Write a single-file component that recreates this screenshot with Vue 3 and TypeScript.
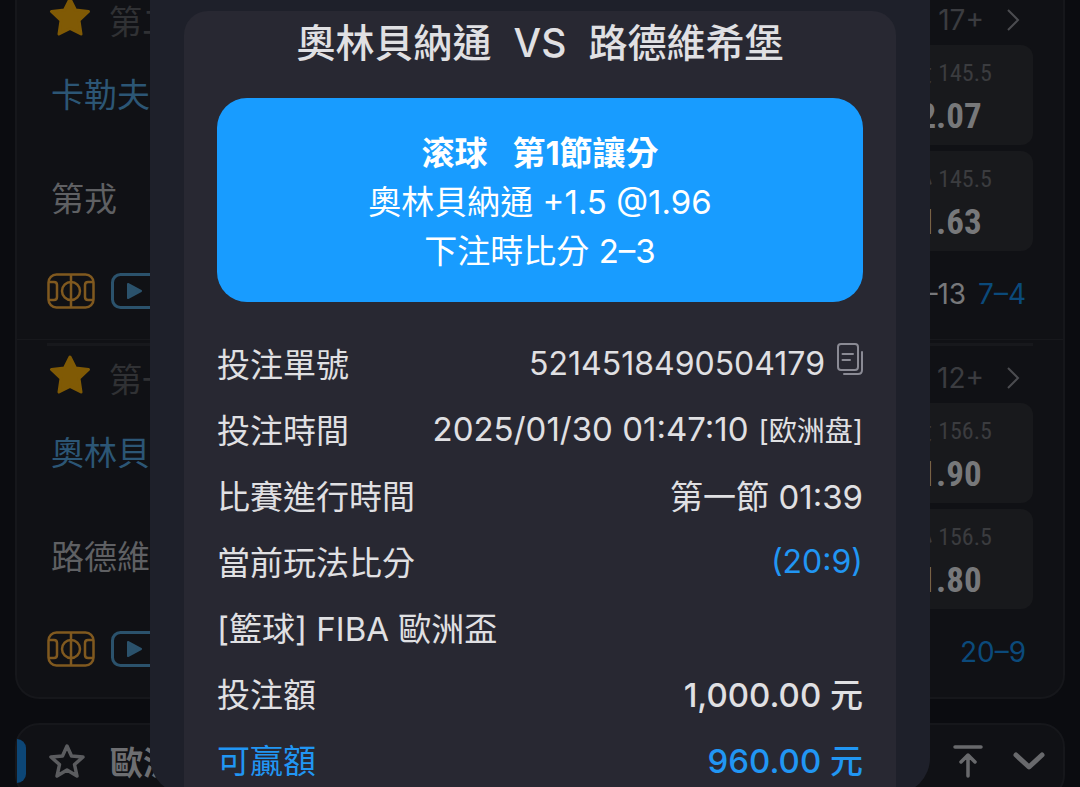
<script setup lang="ts">
interface Odd { label: string; line: string; value: string }
interface Match {
  period: string
  more: string
  home: string
  away: string
  odds: Odd[]
  total: string
  quarter: string
}
interface Row { label: string; value?: string; note?: string; copy?: boolean; tone?: string }

const matches: Match[] = [
  {
    period: '第二', more: '17+', home: '卡勒夫', away: '第戎',
    odds: [{ label: '大', line: '145.5', value: '2.07' }, { label: '小', line: '145.5', value: '1.63' }],
    total: '–13', quarter: '7–4',
  },
  {
    period: '第一', more: '12+', home: '奧林貝', away: '路德維',
    odds: [{ label: '大', line: '156.5', value: '1.90' }, { label: '小', line: '156.5', value: '1.80' }],
    total: '', quarter: '20–9',
  },
]

const rows: Row[] = [
  { label: '投注單號', value: '5214518490504179', copy: true, tone: 'number' },
  { label: '投注時間', value: '2025/01/30 01:47:10', note: '[欧洲盘]' },
  { label: '比賽進行時間', value: '第一節 01:39' },
  { label: '當前玩法比分', value: '(20:9)', tone: 'score' },
  { label: '[籃球] FIBA 歐洲盃' },
  { label: '投注額', value: '1,000.00 元', tone: 'money' },
  { label: '可贏額', value: '960.00 元', tone: 'win' },
]
</script>

<template>
  <div class="screen">
    <main class="list">
      <section class="card">
        <article v-for="m in matches" :key="m.more" class="match">
          <header class="head">
            <button class="icon" type="button" aria-label="收藏">
              <svg width="42" height="40" viewBox="0 0 42 40"><path d="M21 2 L26.500 13 L39.500 14.500 L30 23.500 L32 37 L21 31.500 L10 37 L12 23.500 L2.500 14.500 L15.500 13 Z" fill="#805a05" stroke="#805a05" stroke-width="3" stroke-linejoin="round" /></svg>
            </button>
            <span class="period">{{ m.period }}</span>
            <a class="more" href="#">{{ m.more }}
              <svg width="14" height="24" viewBox="0 0 14 24"><path d="M2 2 L12 12 L2 22" fill="none" stroke="#4b4c50" stroke-width="2" /></svg>
            </a>
          </header>
          <div class="body">
            <div class="teams">
              <span class="home">{{ m.home }}</span>
              <span>{{ m.away }}</span>
            </div>
            <div class="odds">
              <button v-for="o in m.odds" :key="o.label" class="odd" type="button">
                <span class="line"><span>{{ o.label }}</span><span>{{ o.line }}</span></span>
                <strong>{{ o.value }}</strong>
              </button>
            </div>
          </div>
          <footer class="foot">
            <svg width="48" height="36" viewBox="0 0 48 36" fill="none" stroke="#80591f" stroke-width="2.500">
              <rect x="1.500" y="1.500" width="45" height="33" rx="8" />
              <path d="M24 1 V35 M1 9 H7 Q10 9 10 12 V24 Q10 27 7 27 H1 M47 9 H41 Q38 9 38 12 V24 Q38 27 41 27 H47" />
              <circle cx="24" cy="18" r="9" />
            </svg>
            <svg width="52" height="36" viewBox="0 0 52 36">
              <rect x="1.500" y="1.500" width="49" height="33" rx="8" fill="none" stroke="#2b526c" stroke-width="3" />
              <path d="M17 11 L30 18 L17 25 Z" fill="#2b526c" stroke="#2b526c" stroke-width="2" stroke-linejoin="round" />
            </svg>
            <span class="total">{{ m.total }}</span>
            <span class="quarter">{{ m.quarter }}</span>
          </footer>
        </article>
      </section>

      <section class="card league">
        <button class="icon" type="button" aria-label="收藏聯賽">
          <svg width="38" height="36" viewBox="0 0 38 36"><path d="M19 3 L23.500 13 L35 14 L26.500 21.500 L29 33 L19 27 L9 33 L11.500 21.500 L3 14 L14.500 13 Z" fill="none" stroke="#5b5c5f" stroke-width="3.500" stroke-linejoin="round" /></svg>
        </button>
        <h2>歐洲</h2>
        <button class="icon top" type="button" aria-label="回到頂部">
          <svg width="30" height="34" viewBox="0 0 30 34" fill="none" stroke="#68696c" stroke-width="3.500" stroke-linecap="round" stroke-linejoin="round"><path d="M2 3 H28 M15 32 V12 M8 18 L15 11 L22 18" /></svg>
        </button>
        <button class="icon" type="button" aria-label="展開">
          <svg width="32" height="20" viewBox="0 0 32 20" fill="none" stroke="#68696c" stroke-width="5" stroke-linecap="round" stroke-linejoin="round"><path d="M3 4 L16 16 L29 4" /></svg>
        </button>
      </section>
    </main>

    <div class="overlay">
      <div class="dialog" role="dialog" aria-labelledby="title">
        <div class="panel">
          <h1 id="title"><span>奧林貝納通</span><span>VS</span><span>路德維希堡</span></h1>
          <div class="bet">
            <p class="kind"><span>滚球</span><span>第1節讓分</span></p>
            <p>奧林貝納通 +1.5 @1.96</p>
            <p>下注時比分 2–3</p>
          </div>
          <dl>
            <div v-for="r in rows" :key="r.label" class="row" :class="r.tone">
              <dt>{{ r.label }}</dt>
              <dd v-if="r.value">
                {{ r.value }}
                <small v-if="r.note">{{ r.note }}</small>
                <button v-if="r.copy" class="icon copy" type="button" aria-label="複製">
                  <svg width="26" height="32" viewBox="0 0 26 32" fill="none" stroke="#8a8a94" stroke-width="2" stroke-linecap="round">
                    <rect x="1" y="1" width="20" height="26" rx="3" />
                    <path d="M5.500 11 H16 M5.500 17 H13 M25 9 V27 Q25 31 21 31 H7" />
                  </svg>
                </button>
              </dd>
            </div>
          </dl>
        </div>
      </div>
    </div>
  </div>
</template>

<style>
body { margin: 0; background: #0b0c10; }
</style>

<style scoped>
* { box-sizing: border-box; }
.screen {
  position: relative;
  height: 100vh;
  overflow: hidden;
  background: #0b0c10;
  color: #5f6063;
  font-family: Inter, "Noto Sans CJK TC", sans-serif;
  font-size: 33px;
}
h1, h2, p, dl, dd { margin: 0; font-weight: 400; }
button { font-family: inherit; color: inherit; border: 0; padding: 0; }
svg { display: block; flex: none; }
.icon { display: flex; background: none; }
.list { padding: 0 15px; margin-top: -15px; }
.card { border: 2px solid #16171b; border-radius: 24px; background: #101115; }
.card:first-child { border-top: 0; border-radius: 0 0 24px 24px; }
.match { height: 355px; margin-bottom: 3px; padding: 0 30px; border-bottom: 1px solid #17181c; }
.match + .match { height: 354px; margin-bottom: 0; border-bottom: 0; }
.match + .match .head { border-top: 3px solid #17181c; }
.head { display: flex; align-items: center; height: 60px; padding-top: 4px; }
.match + .match .head { padding-top: 0; }
.head .icon { margin-left: 2px; }
.period { margin-left: 18px; padding-top: 6px; color: #303134; }
.more {
  display: flex;
  align-items: center;
  gap: 22px;
  margin-left: auto;
  padding: 6px 13px 0 0;
  color: #3b3c40;
  font-size: 28px;
  text-decoration: none;
}
.body { display: flex; justify-content: space-between; }
.teams { display: grid; grid-template-rows: 96px 100px; gap: 6px; align-items: center; align-content: start; padding-left: 4px; }
.home { color: #2c5675; }
.odds { display: grid; grid-template-rows: 100px 100px; gap: 6px; width: 166px; }
.odd {
  display: flex;
  flex-direction: column;
  align-items: center;
  gap: 8px;
  padding-top: 10px;
  border-radius: 12px;
  background: #18191c;
  color: #77787a;
  font-family: "Roboto Condensed", "Liberation Sans Narrow", "Noto Sans CJK TC", sans-serif;
}
.line { display: flex; gap: 6px; color: #3b3c3f; font-size: 24px; line-height: 36px; }
.odd strong { font-size: 35px; line-height: 36px; }
.foot { display: flex; align-items: center; gap: 16px; height: 80px; }
.foot span { font-size: 28px; padding-top: 6px; }
.total { margin-left: auto; color: #77787a; }
.foot .quarter { margin: 0 7px 0 -4px; color: #0b4a7b; }
.league {
  position: relative;
  display: flex;
  align-items: center;
  height: 76px;
  margin-top: 24px;
  padding: 0 18px 0 31px;
}
.league::before {
  content: "";
  position: absolute;
  left: 0;
  width: 9px;
  height: 44px;
  border-radius: 0 9px 9px 0;
  background: #0c4676;
}
h2 { margin-left: 24px; font-size: 33px; font-weight: 700; color: #6d6e71; }
.league .top { margin: 0 30px 0 auto; }

.overlay { position: absolute; inset: 0; padding: 0 150px; overflow: hidden; }
.dialog {
  padding: 11px 34px 0;
  border-radius: 0 0 36px 36px;
  background: #1e202a;
  color: #e0e0e3;
}
.panel { padding: 0 33px; border-radius: 24px 24px 0 0; background: #282832; }
h1 {
  display: flex;
  justify-content: center;
  gap: 22px;
  height: 87px;
  font-size: 39px;
  font-weight: 500;
  line-height: 64px;
}
.bet {
  padding: 31px 0 26px;
  border-radius: 30px;
  background: #189cff;
  color: #ffffff;
  text-align: center;
  line-height: 49px;
}
.kind { display: flex; justify-content: center; gap: 25px; font-weight: 700; }
dl { padding: 28px 0 2px; }
.row { display: flex; justify-content: space-between; align-items: center; height: 66px; }
dd { display: flex; align-items: center; gap: 10px; }
small { font-size: 28px; }
.number dd, .score dd { font-size: 32px; gap: 12px; }
.copy { padding-bottom: 8px; }
.money dd, .win dd { font-weight: 500; }
.score dd, .win { color: #2196f3; }
</style>
